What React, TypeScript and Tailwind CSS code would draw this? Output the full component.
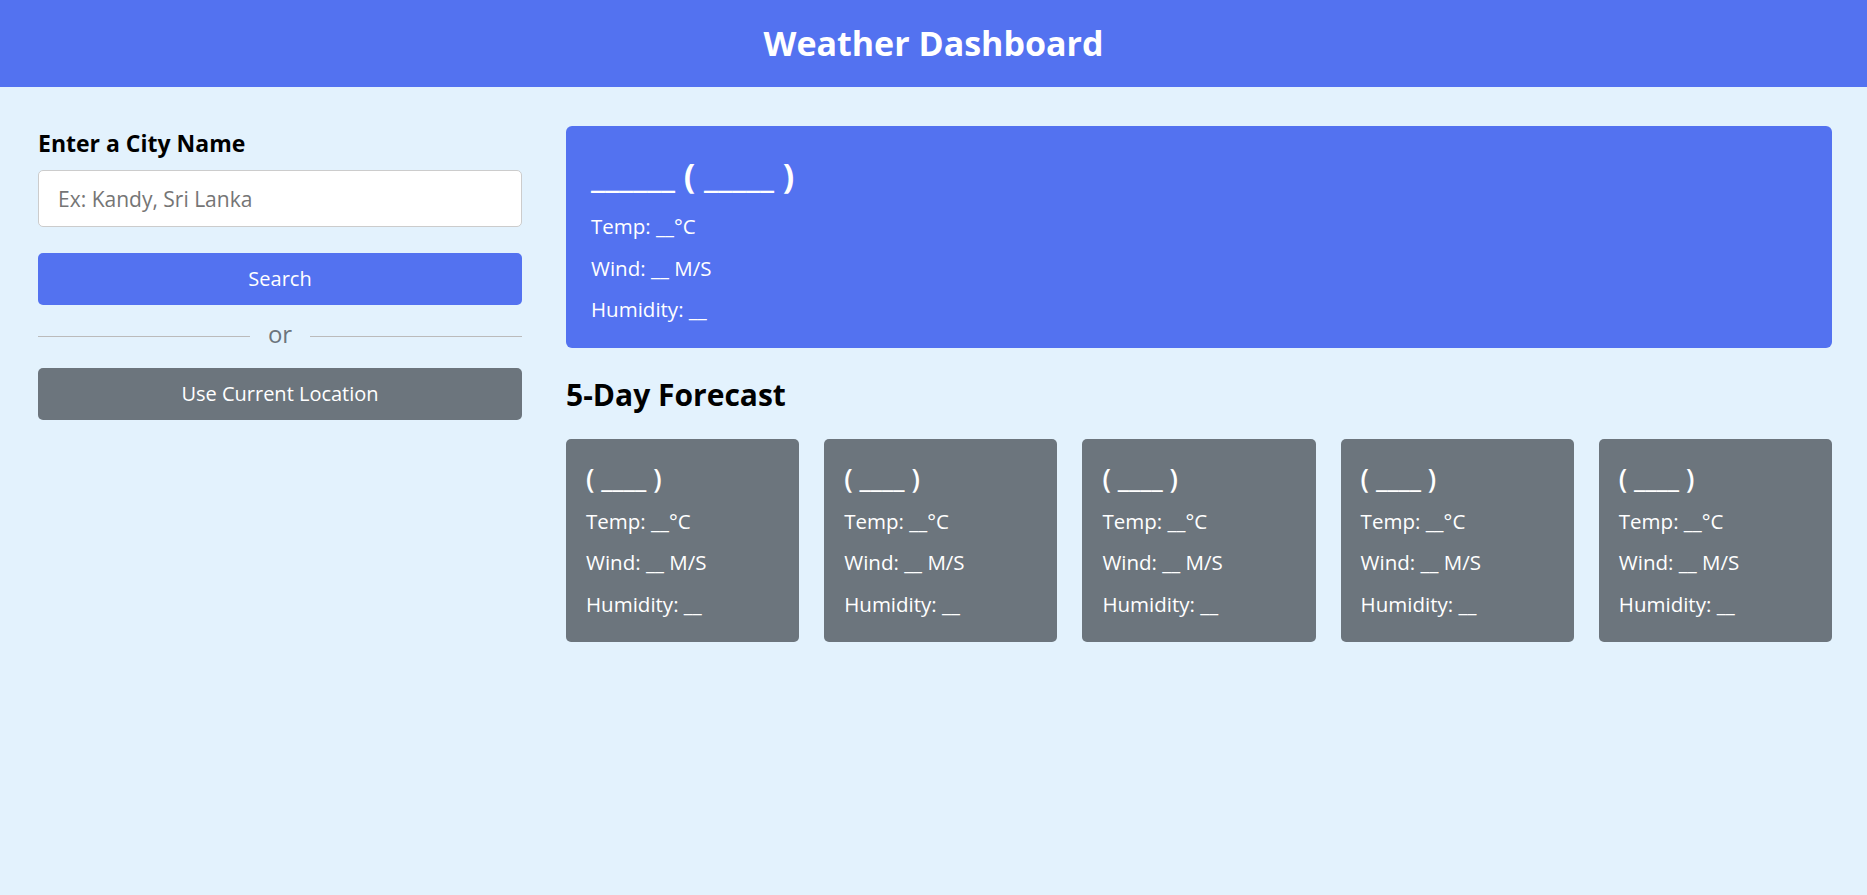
import React from "react";

const font = { fontFamily: '"Open Sans", "Noto Sans", sans-serif' };

export default function App() {
  const days = [0, 1, 2, 3, 4];
  return (
    <div className="min-h-screen bg-[#E3F2FD] text-black" style={font}>
      <h1 className="bg-[#5372F0] py-[21px] text-center text-[34px] font-bold leading-[45px] text-white">
        Weather Dashboard
      </h1>
      <div className="flex gap-[44px] pl-[38px] pr-[35px] pt-[39px]">
        <div className="w-[484px] shrink-0 pt-[1px]">
          <h3 className="text-[23px] font-bold leading-[32px]">Enter a City Name</h3>
          <input
            type="text"
            placeholder="Ex: Kandy, Sri Lanka"
            className="mb-[26px] mt-[11px] block h-[57px] w-full rounded-[5px] border border-[#cccccc] bg-white px-[19px] text-[21px] outline-none placeholder:text-[#757575]"
          />
          <button className="block h-[52px] w-full rounded-[5px] bg-[#5372F0] text-[20px] text-white">
            Search
          </button>
          <div className="my-[31px] flex h-px items-center justify-center bg-[#BBBBBB]">
            <span className="-mt-[6px] bg-[#E3F2FD] px-[18px] text-[24px] leading-[32px] text-[#6C757D]">or</span>
          </div>
          <button className="block h-[52px] w-full rounded-[5px] bg-[#6C757D] text-[20px] text-white">
            Use Current Location
          </button>
        </div>
        <div className="min-w-0 flex-1">
          <div className="rounded-[6px] bg-[#5372F0] px-[25px] pb-[25px] pt-[27px] text-white">
            <h2 className="text-[34px] font-bold leading-[44px]">______ ( _____ )</h2>
            <h6 className="mt-[15px] text-[20.5px] font-medium leading-[28px]">Temp: __°C</h6>
            <h6 className="mt-[13.5px] text-[20.5px] font-medium leading-[28px]">Wind: __ M/S</h6>
            <h6 className="mt-[13.5px] text-[20.5px] font-medium leading-[28px]">Humidity: __</h6>
          </div>
          <h2 className="mb-[23.5px] mt-[26px] text-[30px] font-bold leading-[41px]">5-Day Forecast</h2>
          <ul className="flex gap-[25px]">
            {days.map((d) => (
              <li key={d} className="flex-1 rounded-[5px] bg-[#6C757D] px-[20px] pb-[24px] pt-[21px] text-white">
                <h3 className="text-[26.5px] font-semibold leading-[36px]">( ____ )</h3>
                <h6 className="mt-[11px] text-[20.5px] font-medium leading-[28px]">Temp: __°C</h6>
                <h6 className="mt-[13.7px] text-[20.5px] font-medium leading-[28px]">Wind: __ M/S</h6>
                <h6 className="mt-[13.7px] text-[20.5px] font-medium leading-[28px]">Humidity: __</h6>
              </li>
            ))}
          </ul>
        </div>
      </div>
    </div>
  );
}
